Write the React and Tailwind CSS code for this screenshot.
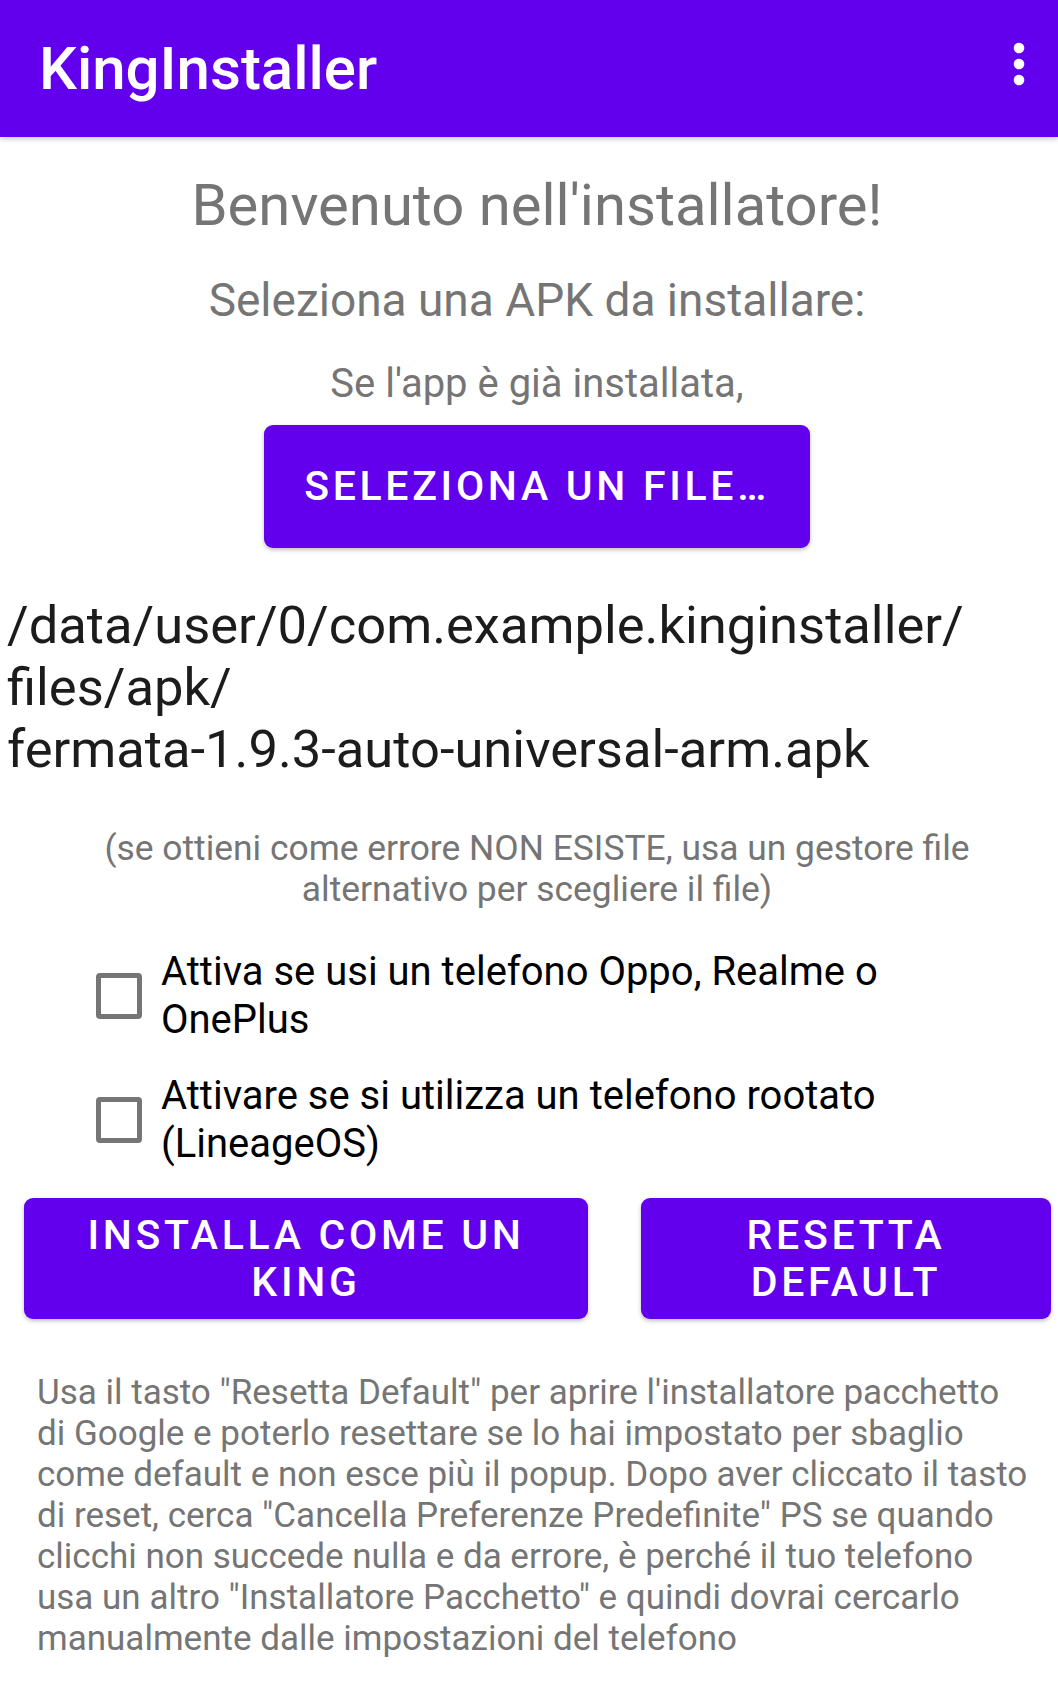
import React from "react";

const Checkbox = () => (
  <span className="block w-[46px] h-[46px] shrink-0 rounded-[4px] border-[5px] border-[#757575]" />
);

const CheckRow = ({ children, className = "" }) => (
  <label className={`flex items-center pl-[96px] gap-[19px] ${className}`}>
    <Checkbox />
    <span className="text-[40px] leading-[48px] text-black">{children}</span>
  </label>
);

export default function App() {
  return (
    <div className="min-h-[1685px] bg-white font-[Roboto,sans-serif] overflow-hidden">
      <header className="relative z-10 h-[137px] bg-[#6200EE] flex items-center justify-between pl-[39px] pr-[33px] shadow-[0_2px_5px_rgba(0,0,0,0.22)]">
        <h1 className="text-white text-[60px] leading-none font-medium">KingInstaller</h1>
        <svg width="12" height="44" viewBox="0 0 12 44" className="mb-[9px]">
          <circle cx="6" cy="6" r="5.3" fill="white" />
          <circle cx="6" cy="22" r="5.3" fill="white" />
          <circle cx="6" cy="38" r="5.3" fill="white" />
        </svg>
      </header>

      <main className="flex flex-col">
        <div className="flex flex-col items-center pl-[16px] text-[#757575]">
          <p className="mt-[34px] text-[58px] leading-[69px]">Benvenuto nell'installatore!</p>
          <p className="mt-[33px] text-[46px] leading-[55px]">Seleziona una APK da installare:</p>
          <p className="mt-[32px] text-[40px] leading-[48px]">Se l'app è già installata,</p>
          <button className="mt-[17px] w-[546px] h-[123px] rounded-[9px] bg-[#6200EE] text-white text-[41px] font-medium tracking-[0.09em] shadow-[0_2px_4px_rgba(0,0,0,0.25)]">
            SELEZIONA UN FILE…
          </button>
        </div>

        <p className="mt-[46px] pl-[7px] text-[52.5px] leading-[62px] text-[#1c1c1c]">
          /data/user/0/com.example.kinginstaller/
          <br />
          files/apk/
          <br />
          fermata-1.9.3-auto-universal-arm.apk
        </p>

        <p className="mt-[48px] pl-[16px] text-center text-[35.4px] leading-[41px] text-[#757575]">
          (se ottieni come errore NON ESISTE, usa un gestore file
          <br />
          alternativo per scegliere il file)
        </p>

        <CheckRow className="mt-[38px]">
          Attiva se usi un telefono Oppo, Realme o
          <br />
          OnePlus
        </CheckRow>
        <CheckRow className="mt-[28px]">
          Attivare se si utilizza un telefono rootato
          <br />
          (LineageOS)
        </CheckRow>

        <div className="mt-[30px] flex pl-[24px] gap-[53px]">
          <button className="w-[564px] h-[121px] rounded-[9px] bg-[#6200EE] text-white text-[41px] leading-[47px] font-medium tracking-[0.09em] shadow-[0_2px_4px_rgba(0,0,0,0.25)]">
            INSTALLA COME UN
            <br />
            KING
          </button>
          <button className="w-[410px] h-[121px] rounded-[9px] bg-[#6200EE] text-white text-[41px] leading-[47px] font-medium tracking-[0.09em] shadow-[0_2px_4px_rgba(0,0,0,0.25)]">
            RESETTA
            <br />
            DEFAULT
          </button>
        </div>

        <p className="mt-[53px] pl-[37px] w-[1058px] text-[35px] leading-[41px] text-[#757575]">
          Usa il tasto "Resetta Default" per aprire l'installatore pacchetto
          <br />
          di Google e poterlo resettare se lo hai impostato per sbaglio
          <br />
          come default e non esce più il popup. Dopo aver cliccato il tasto
          <br />
          di reset, cerca "Cancella Preferenze Predefinite" PS se quando
          <br />
          clicchi non succede nulla e da errore, è perché il tuo telefono
          <br />
          usa un altro "Installatore Pacchetto" e quindi dovrai cercarlo
          <br />
          manualmente dalle impostazioni del telefono
        </p>
      </main>
    </div>
  );
}
